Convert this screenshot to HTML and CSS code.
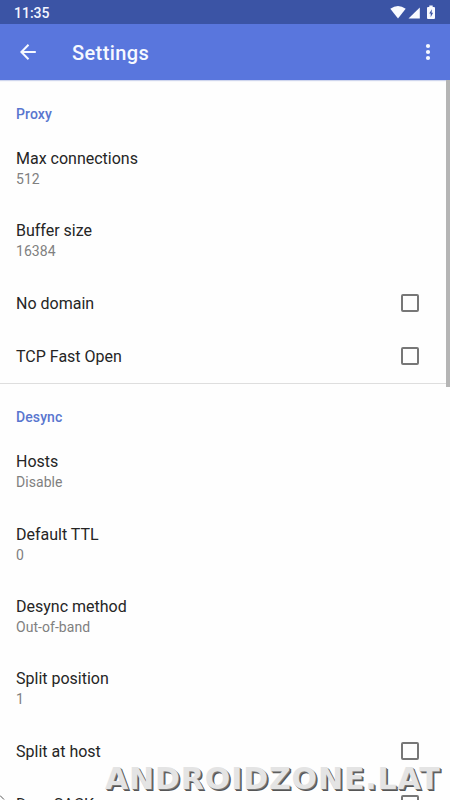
FILE: index.html
```html
<!DOCTYPE html>
<html lang="en">
<head>
<meta charset="utf-8">
<title>Settings</title>
<link rel="stylesheet" href="styles.css">
</head>
<body>
<div class="screen">
  <div class="status">
    <span class="clock">11:35</span>
    <svg class="status-icons" width="48" height="16" viewBox="0 0 48 16" fill="#f8faff">
      <path d="M0.3 3.8Q8 -1.7 15.7 3.8L8 13.6Z"/>
      <path d="M29.8 2.6V13.6H18.5Z"/>
      <path fill-rule="evenodd" d="M39.3 .6h3.4v1.3h1.3q1 0 1 1v10.2q0 1-1 1h-6q-1 0-1-1v-10.2q0-1 1-1h1.3zM41.9 4.2l-2.7 4.4h1.5v3.7l2.4-4.6h-1.5z"/>
    </svg>
  </div>
  <header class="bar">
    <svg class="back" width="16" height="16" viewBox="0 0 16 16" fill="none" stroke="#f6f9ff" stroke-width="2"><path d="M15.8 8H1.6M8.5 .8L1.4 8l7.1 7.2"/></svg>
    <h1 class="heading">Settings</h1>
    <svg class="more" width="6" height="18" viewBox="0 0 6 18" fill="#f6f9ff"><circle cx="3" cy="3" r="2.1"/><circle cx="3" cy="9" r="2.1"/><circle cx="3" cy="15" r="2.1"/></svg>
  </header>
  <main class="list">
    <h2 class="category">Proxy</h2>
    <div class="row double"><div class="title">Max connections</div><div class="summary">512</div></div>
    <div class="row double"><div class="title">Buffer size</div><div class="summary">16384</div></div>
    <div class="row single"><div class="title">No domain</div><span class="box"></span></div>
    <div class="row single"><div class="title">TCP Fast Open</div><span class="box"></span></div>
    <h2 class="category divided">Desync</h2>
    <div class="row double"><div class="title">Hosts</div><div class="summary">Disable</div></div>
    <div class="row double"><div class="title">Default TTL</div><div class="summary">0</div></div>
    <div class="row double"><div class="title">Desync method</div><div class="summary">Out-of-band</div></div>
    <div class="row double"><div class="title">Split position</div><div class="summary">1</div></div>
    <div class="row single"><div class="title">Split at host</div><span class="box"></span></div>
    <div class="row single"><div class="title">Drop SACK</div><span class="box"></span></div>
  </main>
  <div class="scrollbar"></div>
  <svg class="corner" width="5" height="5" viewBox="0 0 5 5" fill="none" stroke="#555"><path d="M0 .5L4 4.5"/></svg>
  <div class="watermark">ANDROIDZONE.LAT</div>
</div>
</body>
</html>
```
FILE: styles.css
```css
* { box-sizing: border-box; }
body { margin: 0; font-family: Roboto, sans-serif; background: #fefefe; }
.screen { position: relative; width: 450px; height: 800px; overflow: hidden; background: #fefefe; }
.status { height: 24px; padding: 0 12px 0 14px; display: flex; align-items: center; justify-content: space-between; background: #3b54a5; color: #f3f6ff; }
.clock { font-size: 14px; font-weight: 500; line-height: 24px; padding-top: 1px; }
.status-icons { align-self: flex-start; margin-top: 5px; }
.bar { height: 56px; display: flex; align-items: center; padding: 0 19px 0 20px; background: #5976dd; box-shadow: 0 1px 1px #cfd6ee; }
.heading { flex: 1; margin: 2px 0 0 36px; font-size: 20px; font-weight: 500; letter-spacing: .4px; color: #f6f9ff; }
.category { margin: 0; height: 51.4px; padding: 24px 16px 0; font-size: 14px; font-weight: 500; line-height: 20px; letter-spacing: .1px; color: #5976cf; }
.list .divided { border-top: 1px solid #dedede; padding-top: 23px; }
.row { padding: 0 16px; }
.double { height: 72.45px; padding-top: 16.5px; }
.single { height: 53.5px; display: flex; align-items: center; justify-content: space-between; padding-right: 31px; }
.title { font-size: 16px; line-height: 21px; color: #252525; }
.summary { font-size: 14px; line-height: 20px; letter-spacing: .05px; color: #808080; }
.box { width: 18px; height: 18px; margin-bottom: 1px; border: 2px solid #777; border-radius: 2px; }
.scrollbar { position: absolute; right: 0; top: 80px; width: 4px; height: 307px; background: #b5b5b5; }
.corner { position: absolute; left: 0; bottom: 0; }
.watermark { position: absolute; left: 105px; top: 761px; font: bold 30px/36px "DejaVu Sans", sans-serif; letter-spacing: .87px; color: #e4e4e4; text-shadow: 1px 1px 0 #777, 2px 2px 0 #555; white-space: nowrap; }
```
